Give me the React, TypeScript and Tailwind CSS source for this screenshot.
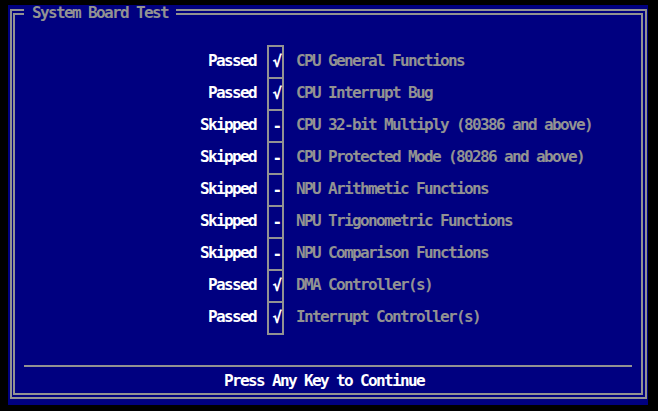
import React from "react";

const rows: { status: "Passed" | "Skipped"; text: string }[] = [
  { status: "Passed", text: "CPU General Functions" },
  { status: "Passed", text: "CPU Interrupt Bug" },
  { status: "Skipped", text: "CPU 32-bit Multiply (80386 and above)" },
  { status: "Skipped", text: "CPU Protected Mode (80286 and above)" },
  { status: "Skipped", text: "NPU Arithmetic Functions" },
  { status: "Skipped", text: "NPU Trigonometric Functions" },
  { status: "Skipped", text: "NPU Comparison Functions" },
  { status: "Passed", text: "DMA Controller(s)" },
  { status: "Passed", text: "Interrupt Controller(s)" },
];

const font = {
  fontFamily: '"DejaVu Sans Mono", "Liberation Mono", monospace',
};

export default function App() {
  return (
    <div
      className="w-[658px] h-[411px] bg-black pt-[5px] pl-[8px] overflow-hidden"
      style={font}
    >
      <div className="w-[640px] h-[400px] bg-[#000080] pt-[4px] pl-[2px] pr-[1px] pb-[6px]">
        <div className="relative h-full border-2 border-[#929292] pt-[2px] pb-[2px] pl-[1px] pr-[2px]">
          <div className="h-full border-2 border-[#929292] flex flex-col text-[16px] leading-[16px] font-bold tracking-[-1.63px]">
            <div className="h-[30px] shrink-0" />
            <div className="flex flex-col">
              {rows.map((r, i) => {
                const last = i === rows.length - 1;
                return (
                  <div
                    key={i}
                    className={`flex ${last ? "h-[34px] pb-[2px]" : "h-[32px]"}`}
                  >
                    <div className="w-[241px] flex items-center justify-end text-white">
                      {r.status}
                    </div>
                    <div className="w-[11px]" />
                    <div
                      className={`w-[17px] border-x-2 border-t-2 border-[#929292] flex items-center justify-center text-white ${
                        last ? "border-b-2 -mb-[2px]" : ""
                      }`}
                    >
                      <span className="pl-[2px]">{r.status === "Passed" ? "√" : "-"}</span>
                    </div>
                    <div className="w-[12px]" />
                    <div className="flex items-center text-[#929292] whitespace-pre">
                      {r.text}
                    </div>
                  </div>
                );
              })}
            </div>
            <div className="flex-1" />
            <div className="ml-[9px] mr-[9px] h-[2px] bg-[#929292]" />
            <div className="h-[6px]" />
            <div className="pl-[209px] text-white whitespace-pre h-[16px]">
              Press Any Key to Continue
            </div>
            <div className="h-[4px]" />
          </div>
          <div className="absolute left-[12px] top-[-6px] w-[152px] h-[16px] bg-[#000080] pl-[8px] text-[16px] leading-[16px] font-bold tracking-[-1.63px] text-[#929292] whitespace-pre">
            System Board Test
          </div>
        </div>
      </div>
    </div>
  );
}
